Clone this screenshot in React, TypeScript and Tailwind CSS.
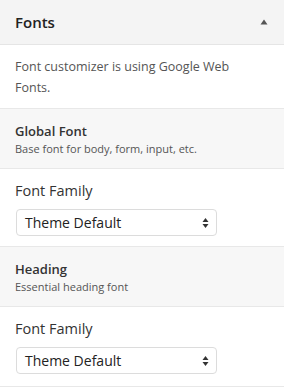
import React from "react";

function Arrows() {
  return (
    <svg width="7" height="12" viewBox="0 0 7 12" className="text-[#333]">
      <path d="M3.5 1 L6.5 5 L0.5 5 Z" fill="currentColor" />
      <path d="M3.5 11 L6.5 7 L0.5 7 Z" fill="currentColor" />
    </svg>
  );
}

function Select() {
  return (
    <div className="w-[201px] h-[27px] border border-[#dcdcdc] rounded-[4px] bg-white flex items-center justify-between pl-[8px] pr-[7px]">
      <span className="text-[14px] text-[#222]">Theme Default</span>
      <Arrows />
    </div>
  );
}

export default function App() {
  return (
    <div className="w-[284px] h-[387px] bg-white text-[#444] overflow-hidden" style={{ fontFamily: '"Open Sans", sans-serif' }}>
      <div className="h-[45px] bg-[#f4f4f4] border-b border-[#e5e5e5] flex items-center justify-between pl-[15px] pr-[16px]">
        <span className="text-[15px] font-semibold text-[#222]">Fonts</span>
        <svg width="8" height="6" viewBox="0 0 8 6"><path d="M4 0.5 L7.5 5.5 L0.5 5.5 Z" fill="#555" /></svg>
      </div>
      <div className="h-[64px] border-b border-[#e8e8e8] pl-[15px] pr-[30px] pt-[11px] text-[12.5px] leading-[21px] text-[#555]">
        Font customizer is using Google Web Fonts.
      </div>
      <div className="h-[60px] bg-[#f7f7f7] border-b border-[#e8e8e8] px-[15px] pt-[13px]">
        <div className="text-[13px] font-semibold text-[#333] leading-[18px]">Global Font</div>
        <div className="text-[11px] text-[#555] leading-[18px]">Base font for body, form, input, etc.</div>
      </div>
      <div className="h-[78px] border-b border-[#e8e8e8] px-[16px] pt-[12px]">
        <div className="text-[14.5px] text-[#333] leading-[20px] -ml-[1px]">Font Family</div>
        <div className="mt-[8px]"><Select /></div>
      </div>
      <div className="h-[60px] bg-[#f7f7f7] border-b border-[#e8e8e8] px-[15px] pt-[13px]">
        <div className="text-[13px] font-semibold text-[#333] leading-[18px]">Heading</div>
        <div className="text-[11px] text-[#555] leading-[18px]">Essential heading font</div>
      </div>
      <div className="h-[80px] border-b border-[#e8e8e8] px-[16px] pt-[12px]">
        <div className="text-[14.5px] text-[#333] leading-[20px] -ml-[1px]">Font Family</div>
        <div className="mt-[8px]"><Select /></div>
      </div>
    </div>
  );
}
